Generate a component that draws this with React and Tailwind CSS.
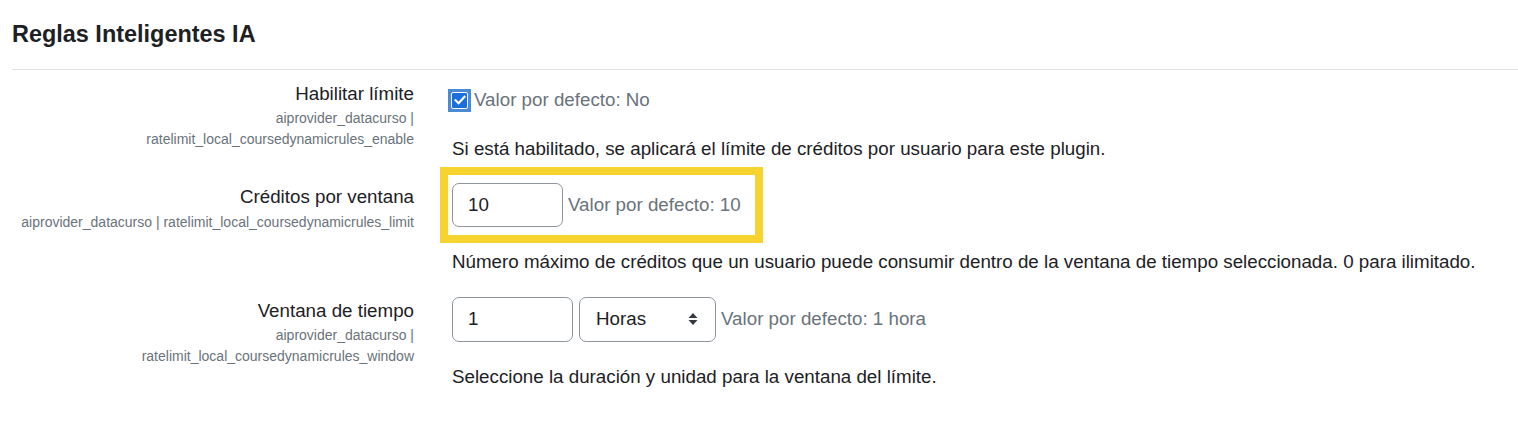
import React from "react";

function Checkbox() {
  return (
    <span className="flex h-[23px] w-[23px] shrink-0 items-center justify-center bg-[#4a8bd6] -ml-[4px]">
      <span className="flex h-[17px] w-[17px] items-center justify-center rounded-[2px] border-[1.5px] border-white bg-[#1a6fdc]">
        <svg width="12" height="10" viewBox="0 0 12 10" fill="none">
          <path d="M1.5 5.2 L4.6 8.2 L10.5 1.8" stroke="white" strokeWidth="2.2" strokeLinecap="square" strokeLinejoin="miter" />
        </svg>
      </span>
    </span>
  );
}

function Label({ title, lines }) {
  return (
    <div className="w-[402px] shrink-0 text-right">
      <div className="text-[18.75px] leading-[1.5] text-[#1d2125]">{title}</div>
      <div className="text-[14px] leading-[1.5] text-[#6a737b]">{lines}</div>
    </div>
  );
}

export default function App() {
  return (
    <div className="min-h-[423px] bg-white pl-[12px] pt-[20px] font-['Liberation_Sans',Arial,sans-serif]">
      <h3 className="text-[23.44px] leading-[1.2] font-bold text-[#1d2125]">Reglas Inteligentes IA</h3>
      <div className="mt-[21px] h-px bg-[#dee2e6]" />
      <div className="mt-[10px] flex flex-col gap-[20px]">
        {/* Row 1 */}
        <div className="flex">
          <Label title="Habilitar límite" lines="aiprovider_datacurso | ratelimit_local_coursedynamicrules_enable" />
          <div className="ml-[38px] pt-[6px]">
            <div className="flex items-center gap-[3px] text-[18.75px] leading-[1.5]">
              <Checkbox />
              <span className="text-[#6a737b]">Valor por defecto: No</span>
            </div>
            <div className="mt-[21px] text-[18.75px] leading-[1.5] text-[#1d2125]">
              Si está habilitado, se aplicará el límite de créditos por usuario para este plugin.
            </div>
          </div>
        </div>

        {/* Row 2 */}
        <div className="flex">
          <Label title="Créditos por ventana" lines="aiprovider_datacurso | ratelimit_local_coursedynamicrules_limit" />
          <div className="ml-[38px]">
            <div className="relative inline-flex items-center gap-[5px]">
              <div className="flex h-[44px] w-[111px] items-center rounded-[7px] border border-[#8f959e] bg-white pl-[15px] text-[18.75px] text-[#1d2125]">
                10
              </div>
              <span className="text-[18.75px] leading-[1.5] text-[#6a737b]">Valor por defecto: 10</span>
              <div className="pointer-events-none absolute -top-[16px] -bottom-[16px] -left-[12px] -right-[22px] border-[8px] border-[#f6d32e]" />
            </div>
            <div className="mt-[21px] text-[18.75px] leading-[1.5] text-[#1d2125]">
              Número máximo de créditos que un usuario puede consumir dentro de la ventana de tiempo seleccionada. 0 para ilimitado.
            </div>
          </div>
        </div>

        {/* Row 3 */}
        <div className="flex">
          <Label title="Ventana de tiempo" lines="aiprovider_datacurso | ratelimit_local_coursedynamicrules_window" />
          <div className="ml-[38px]">
            <div className="flex items-center">
              <div className="flex h-[45px] w-[121px] items-center rounded-[7px] border border-[#8f959e] bg-white pl-[15px] text-[18.75px] text-[#1d2125]">
                1
              </div>
              <div className="ml-[6px] flex h-[45px] w-[137px] items-center justify-between rounded-[7px] border border-[#8f959e] bg-white pl-[16px] pr-[17px] text-[18.75px] text-[#1d2125]">
                <span>Horas</span>
                <svg width="10" height="14" viewBox="0 0 10 14">
                  <path d="M5 1 L9.5 6 H0.5 Z M5 13 L0.5 8 H9.5 Z" fill="#343a40" />
                </svg>
              </div>
              <span className="ml-[5px] text-[18.75px] leading-[1.5] text-[#6a737b]">Valor por defecto: 1 hora</span>
            </div>
            <div className="mt-[21px] text-[18.75px] leading-[1.5] text-[#1d2125]">
              Seleccione la duración y unidad para la ventana del límite.
            </div>
          </div>
        </div>
      </div>
    </div>
  );
}
